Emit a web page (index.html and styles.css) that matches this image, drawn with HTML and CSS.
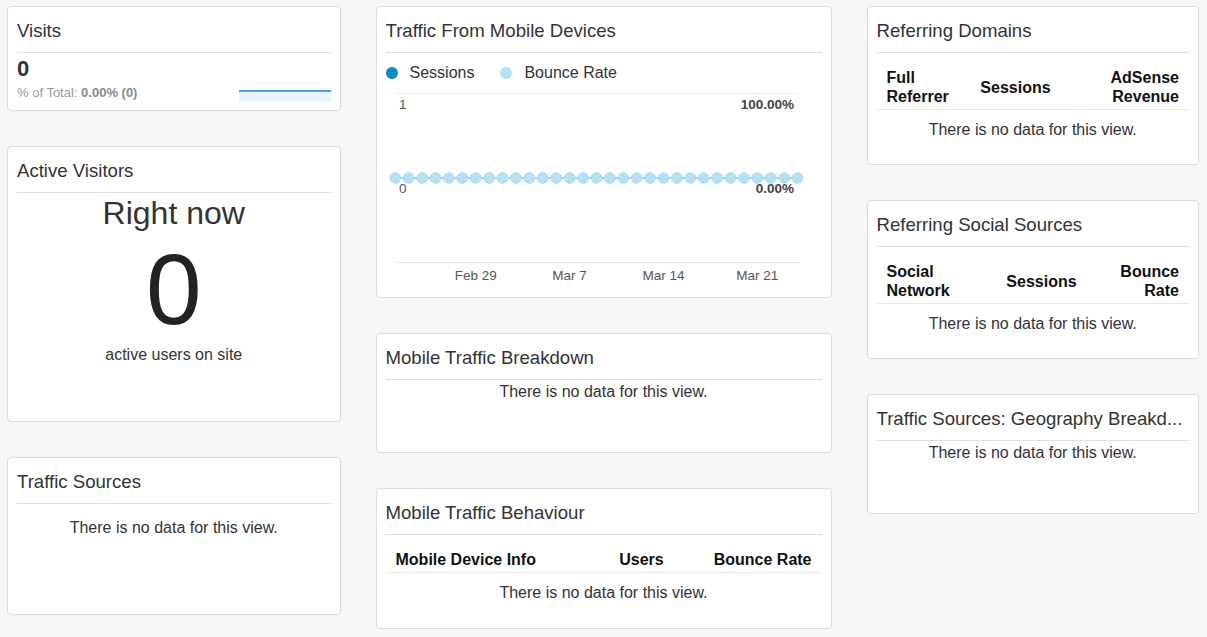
FILE: index.html
```html
<!DOCTYPE html>
<html lang="en">
<head>
    <meta charset="UTF-8">
    <meta name="viewport" content="width=device-width, initial-scale=1.0">
    <title>Dashboard</title>
    <link rel="stylesheet" href="styles.css">
</head>
<body>
    <div class="dashboard">
        <!-- Left column -->
        <div class="column col-left">
            <div class="card card-visits">
                <div class="card-title">Visits</div>
                <div class="visits-body">
                    <div>
                        <div class="visits-count">0</div>
                        <div class="visits-total">% of Total: <b>0.00% (0)</b></div>
                    </div>
                    <svg class="sparkline" width="92" height="12" viewBox="0 0 92 12">
                        <rect x="0" y="1" width="92" height="11" fill="#e7f2fc"/>
                        <line x1="0" y1="1" x2="92" y2="1" stroke="#4a9fe6" stroke-width="2"/>
                    </svg>
                </div>
            </div>

            <div class="card card-active">
                <div class="card-title">Active Visitors</div>
                <div class="active-body">
                    <div class="active-label">Right now</div>
                    <div class="active-count">0</div>
                    <div class="active-sub">active users on site</div>
                </div>
            </div>

            <div class="card card-sources">
                <div class="card-title">Traffic Sources</div>
                <div class="no-data no-data-spaced">There is no data for this view.</div>
            </div>
        </div>

        <!-- Middle column -->
        <div class="column col-middle">
            <div class="card card-chart">
                <div class="card-title">Traffic From Mobile Devices</div>
                <div class="legend">
                    <span class="legend-item"><span class="dot dot-sessions"></span>Sessions</span>
                    <span class="legend-item"><span class="dot dot-bounce"></span>Bounce Rate</span>
                </div>
                <svg id="chart" class="chart" width="437" height="199"></svg>
            </div>

            <div class="card card-breakdown">
                <div class="card-title">Mobile Traffic Breakdown</div>
                <div class="no-data">There is no data for this view.</div>
            </div>

            <div class="card card-behaviour">
                <div class="card-title">Mobile Traffic Behaviour</div>
                <table class="data-table behaviour-table">
                    <thead>
                        <tr>
                            <th class="left">Mobile Device Info</th>
                            <th class="center">Users</th>
                            <th class="right">Bounce Rate</th>
                        </tr>
                    </thead>
                </table>
                <div class="no-data no-data-table">There is no data for this view.</div>
            </div>
        </div>

        <!-- Right column -->
        <div class="column col-right">
            <div class="card card-domains">
                <div class="card-title">Referring Domains</div>
                <table class="data-table domains-table">
                    <thead>
                        <tr>
                            <th class="left">Full Referrer</th>
                            <th class="center">Sessions</th>
                            <th class="right">AdSense Revenue</th>
                        </tr>
                    </thead>
                </table>
                <div class="no-data no-data-table">There is no data for this view.</div>
            </div>

            <div class="card card-social">
                <div class="card-title">Referring Social Sources</div>
                <table class="data-table social-table">
                    <thead>
                        <tr>
                            <th class="left">Social Network</th>
                            <th class="center">Sessions</th>
                            <th class="right">Bounce Rate</th>
                        </tr>
                    </thead>
                </table>
                <div class="no-data no-data-table">There is no data for this view.</div>
            </div>

            <div class="card card-geo">
                <div class="card-title">Traffic Sources: Geography Breakd...</div>
                <div class="no-data">There is no data for this view.</div>
            </div>
        </div>
    </div>

    <script>
        // Draw the bounce rate line chart
        const chart = document.getElementById('chart');
        const ns = 'http://www.w3.org/2000/svg';

        function add(tag, attrs, text) {
            const el = document.createElementNS(ns, tag);
            for (const key in attrs) {
                el.setAttribute(key, attrs[key]);
            }
            if (text) el.textContent = text;
            chart.appendChild(el);
            return el;
        }

        const points = 31;
        const startX = 9.3;
        const step = 13.41;
        const lineY = 91;

        add('line', { x1: 9, y1: 6.5, x2: 413, y2: 6.5, stroke: '#ececec', 'stroke-width': 1 });
        add('line', { x1: 9, y1: 175.5, x2: 413, y2: 175.5, stroke: '#e6e6e6', 'stroke-width': 1 });

        add('text', { x: 13, y: 22, class: 'axis-label' }, '1');
        add('text', { x: 408, y: 22, class: 'axis-label bold', 'text-anchor': 'end' }, '100.00%');

        add('line', { x1: startX, y1: lineY, x2: startX + step * (points - 1), y2: lineY, stroke: '#9ed6ef', 'stroke-width': 2 });
        for (let i = 0; i < points; i++) {
            add('circle', { cx: startX + step * i, cy: lineY, r: 5.4, fill: '#b3e1f5', stroke: '#a3d9f1', 'stroke-width': 0.8 });
        }

        add('text', { x: 13, y: 106, class: 'axis-label' }, '0');
        add('text', { x: 408, y: 106, class: 'axis-label bold', 'text-anchor': 'end' }, '0.00%');

        const dates = [[6, 'Feb 29'], [13, 'Mar 7'], [20, 'Mar 14'], [27, 'Mar 21']];
        dates.forEach(function (d) {
            add('text', { x: startX + step * d[0], y: 193, class: 'axis-label', 'text-anchor': 'middle' }, d[1]);
        });
    </script>
</body>
</html>
```

FILE: styles.css
```css
body {
    font-family: 'Liberation Sans', Arial, sans-serif;
    background-color: #f6f6f6;
    color: #333;
    margin: 0;
    padding: 0;
}

.dashboard {
    display: flex;
    gap: 35px;
    padding: 6px 8px 0 7px;
}

.column {
    display: flex;
    flex-direction: column;
    gap: 35px;
}

.col-left {
    width: 334px;
}

.col-middle {
    width: 456px;
}

.col-right {
    width: 333px;
}

.card {
    box-sizing: border-box;
    background-color: #fff;
    border: 1px solid #dcdcdc;
    border-radius: 4px;
    padding: 0 9px;
}

.card-title {
    font-size: 18.6px;
    line-height: 24px;
    padding: 12px 0 9px;
    border-bottom: 1px solid #e0e0e0;
    white-space: nowrap;
    overflow: hidden;
}

/* Card heights */
.card-visits { height: 105px; }
.card-active { height: 276px; }
.card-sources { height: 158px; }
.card-chart { height: 292px; }
.card-breakdown { height: 120px; }
.card-behaviour { height: 141px; }
.card-domains { height: 159px; }
.card-social { height: 159px; }
.card-geo { height: 120px; }

/* Visits */
.visits-body {
    display: flex;
    justify-content: space-between;
    align-items: flex-end;
    padding-top: 3px;
}

.visits-count {
    font-size: 22px;
    font-weight: bold;
    line-height: 26px;
}

.visits-total {
    font-size: 13px;
    line-height: 16px;
    color: #9a9a9a;
    margin-top: 3px;
}

.visits-total b {
    color: #8c8c8c;
}

.sparkline {
    display: block;
    margin-bottom: -1px;
}

/* Active visitors */
.active-body {
    text-align: center;
}

.active-label {
    font-size: 32px;
    line-height: 36px;
    padding-top: 2px;
}

.active-count {
    font-size: 100px;
    line-height: 100px;
    margin-top: 8px;
    color: #222;
}

.active-sub {
    font-size: 16px;
    line-height: 20px;
    margin-top: 6px;
}

/* Chart */
.legend {
    display: flex;
    gap: 26px;
    margin-top: 10px;
    font-size: 16px;
    line-height: 20px;
}

.legend-item {
    display: flex;
    align-items: center;
}

.dot {
    display: inline-block;
    width: 12px;
    height: 12px;
    border-radius: 50%;
    margin-right: 12px;
}

.dot-sessions {
    background-color: #058dc7;
}

.dot-bounce {
    background-color: #b3e1f5;
}

.chart {
    display: block;
    margin-top: 4px;
}

.axis-label {
    font-family: 'Liberation Sans', Arial, sans-serif;
    font-size: 13.5px;
    fill: #555;
}

.axis-label.bold {
    font-weight: bold;
    fill: #444;
}

/* Tables */
.data-table {
    width: 100%;
    border-collapse: collapse;
    table-layout: fixed;
}

.data-table th {
    font-size: 16px;
    line-height: 19px;
    font-weight: bold;
    color: #111;
    padding: 15px 0 3px;
    border-bottom: 1px solid #e6e6e6;
    vertical-align: middle;
}

.data-table th.left {
    text-align: left;
    padding-left: 10px;
}

.data-table th.center {
    text-align: center;
}

.data-table th.right {
    text-align: right;
    padding-right: 10px;
}

.behaviour-table th:nth-child(1) { width: 194px; }
.behaviour-table th:nth-child(2) { width: 104px; }

.domains-table th:nth-child(1) { width: 80px; }
.domains-table th:nth-child(2) { width: 98px; }

.social-table th:nth-child(1) { width: 80px; }
.social-table th:nth-child(2) { width: 150px; }

.no-data {
    text-align: center;
    font-size: 16px;
    line-height: 20px;
    padding-top: 2px;
}

.no-data-spaced {
    padding-top: 14px;
}

.no-data-table {
    padding-top: 10px;
}
```
